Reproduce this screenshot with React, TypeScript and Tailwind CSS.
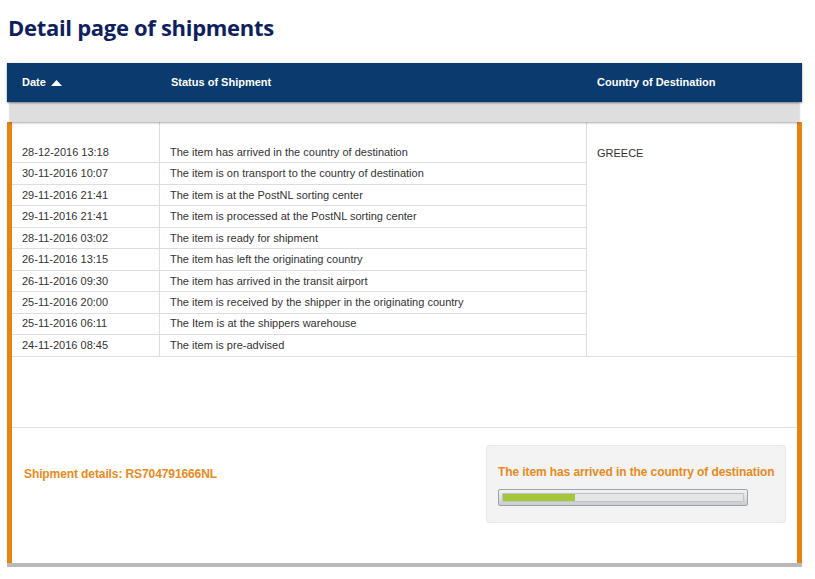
const EVENTS: [string, string][] = [
  ["28-12-2016 13:18", "The item has arrived in the country of destination"],
  ["30-11-2016 10:07", "The item is on transport to the country of destination"],
  ["29-11-2016 21:41", "The item is at the PostNL sorting center"],
  ["29-11-2016 21:41", "The item is processed at the PostNL sorting center"],
  ["28-11-2016 03:02", "The item is ready for shipment"],
  ["26-11-2016 13:15", "The item has left the originating country"],
  ["26-11-2016 09:30", "The item has arrived in the transit airport"],
  ["25-11-2016 20:00", "The item is received by the shipper in the originating country"],
  ["25-11-2016 06:11", "The Item is at the shippers warehouse"],
  ["24-11-2016 08:45", "The item is pre-advised"],
];

function SortUp() {
  return (
    <svg width="11" height="6" viewBox="0 0 11 6" className="ml-[5px] mt-[1px]">
      <path d="M0 6 L5.5 0 L11 6 Z" fill="#ffffff" />
    </svg>
  );
}

export default function App() {
  return (
    <div className="min-h-screen bg-white font-['Liberation_Sans',Arial,sans-serif] text-[#333]">
      <h1 className="pl-[8px] pt-[12px] h-[63px] text-[22px] leading-[30px] font-bold tracking-[-0.3px] text-[#0f1f5e] font-['Open_Sans','Noto_Sans',sans-serif]">
        Detail page of shipments
      </h1>

      <div className="ml-[7px] w-[795px]">
        {/* header */}
        <div className="h-[39px] bg-[#0b3b6e] flex items-center text-white text-[11px] font-bold shadow-[0_1px_2px_rgba(0,0,0,0.45)] relative z-10">
          <div className="w-[153px] pl-[15px] flex items-center">
            Date
            <SortUp />
          </div>
          <div className="w-[427px] pl-[11px]">Status of Shipment</div>
          <div className="flex-1 pl-[10px]">Country of Destination</div>
        </div>

        <div className="mx-[3px] h-[20px] bg-[#dedede] shadow-[0_1px_2px_rgba(0,0,0,0.35)] relative z-[5]" />

        {/* body */}
        <div className="border-l-[5px] border-r-[5px] border-[#ea820f]">
          <div className="flex text-[11px] border-b border-[#dedede]">
            <div className="w-[574px]">
              <div className="flex h-[20px]">
                <div className="w-[148px] border-r border-[#dedede]" />
              </div>
              {EVENTS.map(([date, status], i) => (
                <div
                  key={i}
                  className={
                    "flex h-[21.45px] items-center " +
                    (i < EVENTS.length - 1 ? "border-b border-[#dedede]" : "")
                  }
                >
                  <div className="w-[148px] h-full flex items-center pl-[10px] border-r border-[#dedede]">{date}</div>
                  <div className="flex-1 pl-[10px]">{status}</div>
                </div>
              ))}
            </div>
            <div className="flex-1 border-l border-[#dedede] pl-[10px] pt-[23px]">GREECE</div>
          </div>

          <div className="h-[71px] border-b border-[#dedede]" />

          <div className="h-[135px] flex pt-[17px]">
            <div className="flex-1 pl-[12px] pt-[20px] text-[12px] font-bold text-[#ea8a1c] tracking-[-0.1px]">
              Shipment details: RS704791666NL
            </div>
            <div className="w-[300px] h-[78px] mr-[11px] rounded-[3px] bg-[#f3f3f3] border border-[#e9e9e9] pl-[11px] pt-[19px]">
              <div className="text-[12px] font-bold text-[#ea8a1c] leading-[14px] tracking-[-0.1px]">
                The item has arrived in the country of destination
              </div>
              <div className="mt-[10px] w-[250px] h-[17px] rounded-[2px] border border-[#9fa3a8] bg-gradient-to-b from-[#f2f3f4] to-[#c9ccd0] p-[3px]">
                <div className="h-full rounded-[1px] bg-[#e3e5e7] border border-[#c0c3c7] flex">
                  <div className="w-[72px] h-full bg-[#a5c63b]" />
                </div>
              </div>
            </div>
          </div>
        </div>
        <div className="h-[4px] bg-[#b9b9b9]" />
      </div>
    </div>
  );
}
